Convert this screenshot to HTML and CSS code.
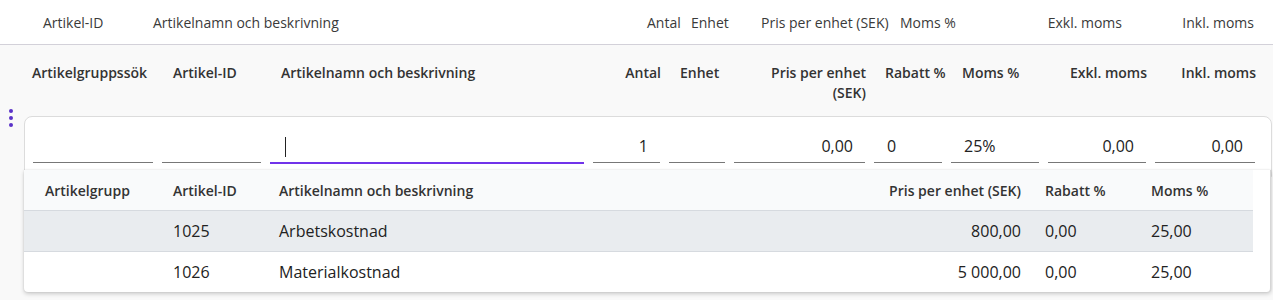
FILE: index.html
```html
<!DOCTYPE html>
<html lang="sv">
<head>
    <meta charset="UTF-8">
    <meta name="viewport" content="width=device-width, initial-scale=1.0">
    <title>Artikelrader</title>
    <link rel="stylesheet" href="styles.css">
</head>
<body>
    <div class="top-bar">
        <span>Artikel-ID</span>
        <span>Artikelnamn och beskrivning</span>
        <span>Antal</span>
        <span>Enhet</span>
        <span>Pris per enhet (SEK)</span>
        <span>Moms %</span>
        <span class="right">Exkl. moms</span>
        <span class="right">Inkl. moms</span>
    </div>

    <div class="rows">
        <div class="head-row">
            <div class="h first">Artikelgruppssök</div>
            <div class="h">Artikel-ID</div>
            <div class="h">Artikelnamn och beskrivning</div>
            <div class="h right">Antal</div>
            <div class="h">Enhet</div>
            <div class="h right wrap">Pris per enhet (SEK)</div>
            <div class="h">Rabatt %</div>
            <div class="h">Moms %</div>
            <div class="h right">Exkl. moms</div>
            <div class="h right">Inkl. moms</div>
        </div>

        <div class="line">
            <div class="handle">
                <span></span><span></span><span></span>
            </div>
            <div class="card">
                <div class="input-row">
                    <input type="text" class="field">
                    <input type="text" class="field">
                    <div class="field focused"><span class="caret"></span></div>
                    <input type="text" class="field num" value="1">
                    <input type="text" class="field">
                    <input type="text" class="field num" value="0,00">
                    <input type="text" class="field" value="0">
                    <input type="text" class="field" value="25%">
                    <input type="text" class="field num" value="0,00">
                    <input type="text" class="field num" value="0,00">
                </div>

                <div class="dropdown">
                    <div class="dd-row dd-head">
                        <div>Artikelgrupp</div>
                        <div>Artikel-ID</div>
                        <div>Artikelnamn och beskrivning</div>
                        <div class="right">Pris per enhet (SEK)</div>
                        <div>Rabatt %</div>
                        <div>Moms %</div>
                    </div>
                    <div class="dd-row active">
                        <div></div>
                        <div>1025</div>
                        <div>Arbetskostnad</div>
                        <div class="right">800,00</div>
                        <div>0,00</div>
                        <div>25,00</div>
                    </div>
                    <div class="dd-row">
                        <div></div>
                        <div>1026</div>
                        <div>Materialkostnad</div>
                        <div class="right">5 000,00</div>
                        <div>0,00</div>
                        <div>25,00</div>
                    </div>
                </div>
            </div>
        </div>
    </div>
</body>
</html>
```

FILE: styles.css
```css
body {
    margin: 0;
    min-height: 300px;
    font-family: "Open Sans", "Liberation Sans", sans-serif;
    font-size: 14px;
    color: #333;
    background-color: #f9f9f9;
}
.top-bar {
    height: 44px;
    background: white;
    border-bottom: 1px solid #d3d1d9;
    display: grid;
    grid-template-columns: 110px 494px 44px 70px 139px 100px 122px 132px;
    align-items: center;
    padding: 0 19px 0 43px;
    color: #3a3a3a;
}
.right {
    text-align: right;
}
.rows {
    padding: 0 0 0 32px;
}
.head-row, .input-row {
    display: grid;
    grid-template-columns: 120px 99px 314px 67px 56px 131px 68px 88px 98px 100px;
    column-gap: 9px;
}
.head-row {
    padding-top: 18px;
    height: 53px;
    line-height: 20px;
    font-weight: 600;
    color: #333;
}
.h {
    padding-left: 12px;
    white-space: nowrap;
}
.h.first {
    padding-left: 0;
}
.h.right {
    padding-left: 0;
    margin-right: -2px;
}
.h.wrap {
    white-space: normal;
    padding-left: 12px;
}
.line {
    position: relative;
}
.handle {
    position: absolute;
    left: -23px;
    top: -7px;
    display: flex;
    flex-direction: column;
    gap: 3px;
}
.handle span {
    width: 4px;
    height: 4px;
    border-radius: 50%;
    background: #5a32c8;
}
.card {
    margin-left: -8px;
    margin-right: 1px;
    background: white;
    border: 1px solid #dcdcdc;
    border-radius: 8px 8px 0 0;
    padding: 14px 0 12px 8px;
    position: relative;
}
.field {
    box-sizing: border-box;
    height: 32px;
    border: none;
    border-bottom: 1px solid #777;
    border-radius: 0;
    font: inherit;
    font-size: 16px;
    color: #222;
    padding: 0 12px 2px 13px;
    background: transparent;
    outline: none;
    min-width: 0;
}
.field.focused {
    border-bottom: 2px solid #7133ea;
    height: 33px;
    display: flex;
    align-items: center;
}
.caret {
    display: inline-block;
    width: 1px;
    height: 20px;
    background: #222;
    margin-left: 2px;
    margin-top: 3px;
}
.num {
    text-align: right;
}
.dropdown {
    position: absolute;
    z-index: 2;
    left: -1px;
    top: 53px;
    width: 1229px;
    padding-right: 17px;
    background: white;
    border-right: 1px solid #d6d6d6;
    box-shadow: 0 2px 4px rgba(0, 0, 0, 0.18), 0 0 2px rgba(0, 0, 0, 0.12);
    border-radius: 0 0 4px 4px;
}
.dd-row {
    display: grid;
    grid-template-columns: 137px 106px 1fr 180px 106px 114px;
    height: 40px;
    align-items: center;
    font-size: 16px;
    color: #222;
}
.dd-row > div {
    padding-left: 12px;
}
.dd-row > div:first-child {
    padding-left: 21px;
}
.dd-row > div.right {
    padding-left: 0;
    padding-right: 12px;
}
.dd-head {
    background: #f9fafb;
    font-size: 14px;
    font-weight: 600;
    color: #333;
    border-bottom: 1px solid #d6dadf;
}
.dd-row.active {
    background: #e9ecef;
    border-bottom: 1px solid #d6dadf;
}
```
